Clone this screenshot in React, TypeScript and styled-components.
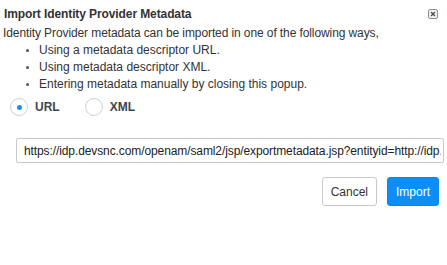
import React from "react";
import styled, { createGlobalStyle } from "styled-components";

const Global = createGlobalStyle`
  html, body { margin: 0; padding: 0; background: #fff; }
  body { font-family: "Liberation Sans", Arial, Helvetica, sans-serif; color: #333; }
`;

const Dialog = styled.div`
  width: 447px;
  height: 265px;
  box-sizing: border-box;
  background: #fff;
  display: flex;
  flex-direction: column;
`;

const Header = styled.div`
  display: flex;
  align-items: center;
  justify-content: space-between;
  padding: 6px 9px 0 4px;
  height: 16px;
`;

const Title = styled.h1`
  margin: 0;
  font-size: 12px;
  line-height: 16px;
  font-weight: bold;
  color: #333;
  letter-spacing: -0.1px;
`;

const CloseButton = styled.button`
  width: 10px;
  height: 10px;
  padding: 0;
  border: 0;
  background: transparent;
  display: flex;
  align-items: center;
  justify-content: center;
  cursor: pointer;
`;

const Body = styled.div`
  padding: 3px 0 0 3px;
  font-size: 12px;
  color: #333;
`;

const Intro = styled.p`
  margin: 0;
  line-height: 16px;
  letter-spacing: -0.1px;
`;

const List = styled.ul`
  margin: 0;
  padding: 1px 0 0 36px;
  line-height: 17px;
  li::marker { font-size: 10px; color: #555; }
`;

const RadioRow = styled.div`
  display: flex;
  align-items: center;
  margin: 5px 0 0 10px;
  height: 18px;
`;

const RadioLabel = styled.label`
  display: flex;
  align-items: center;
  gap: 7px;
  margin-right: 25px;
  font-weight: bold;
  font-size: 12px;
  color: #3c4650;
  cursor: pointer;
`;

const RadioCircle = styled.span<{ $checked?: boolean }>`
  width: 18px;
  height: 18px;
  box-sizing: border-box;
  border-radius: 50%;
  border: 1px solid #cdd0d4;
  background: #fff;
  display: flex;
  align-items: center;
  justify-content: center;
  &::after {
    content: "";
    width: 5px;
    height: 5px;
    border-radius: 50%;
    background: ${(p) => (p.$checked ? "#1a8cf5" : "transparent")};
  }
`;

const UrlInput = styled.input`
  display: block;
  margin: 22px 0 0 16px;
  width: 428px;
  height: 25px;
  box-sizing: border-box;
  border: 1px solid #c9c9c9;
  border-radius: 2px;
  padding: 0 2px 0 7px;
  font-family: "Liberation Sans", Arial, Helvetica, sans-serif;
  font-size: 12px;
  letter-spacing: -0.1px;
  color: #222;
  outline: none;
  background: #fff;
`;

const Actions = styled.div`
  display: flex;
  justify-content: flex-end;
  gap: 10px;
  margin: 14px 8px 0 0;
`;

const Button = styled.button<{ $primary?: boolean }>`
  height: 29px;
  box-sizing: border-box;
  padding: 0 8px;
  border-radius: 3px;
  font-family: "Liberation Sans", Arial, Helvetica, sans-serif;
  font-size: 12px;
  cursor: pointer;
  border: 1px solid ${(p) => (p.$primary ? "#0a86ec" : "#c8c8c8")};
  background: ${(p) => (p.$primary ? "#0d8ef7" : "#fff")};
  color: ${(p) => (p.$primary ? "#fff" : "#333")};
`;

export default function App() {
  return (
    <>
      <Global />
      <Dialog>
        <Header>
          <Title>Import Identity Provider Metadata</Title>
          <CloseButton aria-label="close">
            <svg width="10" height="10" viewBox="0 0 10 10">
              <rect x="0.5" y="0.5" width="9" height="9" rx="1.5" fill="#f4f4f4" stroke="#8a8f96" />
              <path d="M3 3 L7 7 M7 3 L3 7" stroke="#4a5058" strokeWidth="1.4" />
            </svg>
          </CloseButton>
        </Header>
        <Body>
          <Intro>Identity Provider metadata can be imported in one of the following ways,</Intro>
          <List>
            <li>Using a metadata descriptor URL.</li>
            <li>Using metadata descriptor XML.</li>
            <li>Entering metadata manually by closing this popup.</li>
          </List>
        </Body>
        <RadioRow>
          <RadioLabel>
            <RadioCircle $checked />
            URL
          </RadioLabel>
          <RadioLabel>
            <RadioCircle />
            XML
          </RadioLabel>
        </RadioRow>
        <UrlInput
          readOnly
          value="https://idp.devsnc.com/openam/saml2/jsp/exportmetadata.jsp?entityid=http://idp.devsnc.com"
        />
        <Actions>
          <Button>Cancel</Button>
          <Button $primary>Import</Button>
        </Actions>
      </Dialog>
    </>
  );
}
